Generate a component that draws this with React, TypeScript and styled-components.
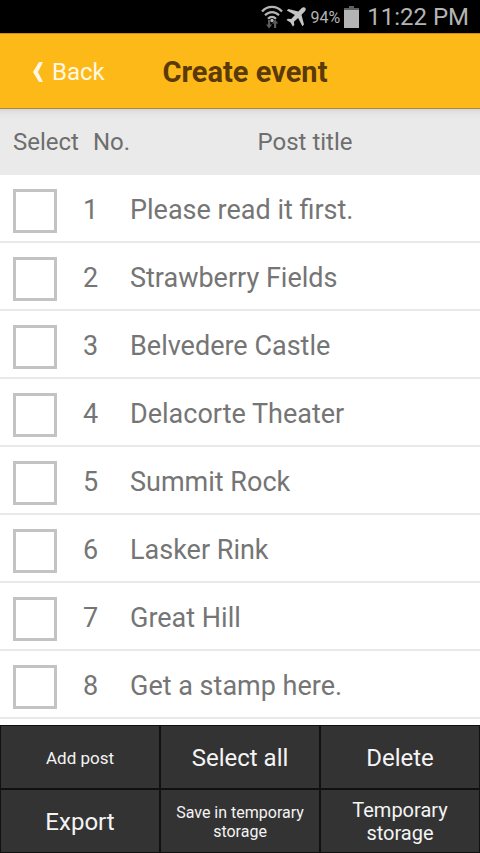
import React, { useState } from "react";
import styled, { createGlobalStyle } from "styled-components";

const GlobalStyle = createGlobalStyle`
  *, *::before, *::after { box-sizing: border-box; }
  body {
    margin: 0;
    background: #ffffff;
    font-family: Roboto, "Liberation Sans", sans-serif;
  }
`;

const Screen = styled.div`
  display: flex;
  flex-direction: column;
  height: 100vh;
`;

const StatusBar = styled.div`
  display: flex;
  flex: none;
  align-items: center;
  justify-content: flex-end;
  height: 33px;
  padding-right: 11px;
  background: #000000;
  color: #b4b4b4;
`;

const StatusIcon = styled.svg<{ $gap: number }>`
  display: block;
  flex: none;
  margin-right: ${(p) => p.$gap}px;
`;

const BatteryLevel = styled.span`
  margin-right: 4px;
  padding-top: 2px;
  font-size: 16px;
  line-height: 32px;
`;

const Clock = styled.time`
  font-size: 24px;
  line-height: 32px;
`;

const TitleBar = styled.header`
  display: grid;
  flex: none;
  grid-template-columns: 1fr auto 1fr;
  align-items: center;
  height: 76px;
  padding-top: 2px;
  padding-left: 33px;
  padding-right: 23px;
  border-top: 1px solid #c98f16;
  border-bottom: 1px solid #a58a4a;
  background: #fdb918;
`;

const BackButton = styled.button`
  display: flex;
  align-items: center;
  gap: 9px;
  justify-self: start;
  padding: 0;
  border: 0;
  background: none;
  color: #fff8e2;
  font-family: inherit;
  font-size: 24px;
  line-height: 32px;
  cursor: pointer;
`;

const Title = styled.h1`
  margin: 0;
  color: #5a3a08;
  font-size: 29px;
  font-weight: 700;
  line-height: 32px;
`;

const PostArea = styled.main`
  flex: 1;
  min-height: 0;
  overflow: hidden;
`;

const PostTable = styled.table`
  width: 100%;
  border-spacing: 0;
  table-layout: fixed;
  color: #757575;
`;

const HeadRow = styled.tr`
  height: 66px;
  background: linear-gradient(#d8d5d2, #e4e4e4 4px, #eaeaea 10px);
`;

const HeadCell = styled.th<{ $width?: number; $center?: boolean }>`
  width: ${(p) => (p.$width ? `${p.$width}px` : "auto")};
  padding: 0 0 0 ${(p) => (p.$center ? 0 : 13)}px;
  color: #6e6e6e;
  font-size: 24px;
  font-weight: 400;
  line-height: 32px;
  text-align: ${(p) => (p.$center ? "center" : "left")};
  white-space: nowrap;
`;

const PostRow = styled.tr`
  height: 68px;
`;

const Cell = styled.td<{ $left?: number; $top?: number }>`
  padding: ${(p) => p.$top ?? 4}px 0 0 ${(p) => p.$left ?? 0}px;
  border-bottom: 2px solid #e9e9e9;
  font-size: 27px;
  line-height: 32px;
  vertical-align: middle;
`;

const Tick = styled.input`
  display: block;
  width: 44px;
  height: 44px;
  margin: 0;
  border: 3px solid #c3c3c3;
  background: #ffffff;
  appearance: none;
  cursor: pointer;

  &:checked {
    background: #fdb918;
  }
`;

const Actions = styled.footer`
  display: grid;
  flex: none;
  grid-template-columns: repeat(3, 1fr);
  grid-auto-rows: 64px;
`;

const ActionButton = styled.button<{ $size: number; $line: number }>`
  padding: 1px 12px 0;
  border: 1px solid #101010;
  background: #333333;
  color: #f4f4f4;
  font-family: inherit;
  font-size: ${(p) => p.$size}px;
  line-height: ${(p) => p.$line}px;
  text-align: center;
  cursor: pointer;
`;

const posts = [
  "Please read it first.",
  "Strawberry Fields",
  "Belvedere Castle",
  "Delacorte Theater",
  "Summit Rock",
  "Lasker Rink",
  "Great Hill",
  "Get a stamp here.",
];

const actions = [
  { label: "Add post", size: 17, line: 24 },
  { label: "Select all", size: 24, line: 32 },
  { label: "Delete", size: 24, line: 32 },
  { label: "Export", size: 24, line: 32 },
  { label: "Save in temporary storage", size: 16, line: 19 },
  { label: "Temporary storage", size: 20, line: 23 },
];

function WifiIcon() {
  return (
    <StatusIcon $gap={3} width="22" height="24" viewBox="0 0 22 24" aria-hidden="true">
      <g fill="none" stroke="#b4b4b4" strokeWidth="2.2">
        <path d="M1 6.500C6.500 .3 15.500 .3 21 6.500" />
        <path d="M4 10.300C8 6 14 6 18 10.300" />
        <path d="M7 13.800C9.500 11.300 12.500 11.300 15 13.800" />
      </g>
      <circle cx="11" cy="15.500" r="1.700" fill="#b4b4b4" />
      <g fill="#5c5c5c">
        <path d="M7 15h2.200v4.500h2L8.100 23.500 5 19.500h2z" />
        <path d="M13 23h2.200v-4.500h2L14.100 14.500 11 18.500h2z" />
      </g>
    </StatusIcon>
  );
}

function PlaneIcon() {
  return (
    <StatusIcon $gap={4} width="20" height="20" viewBox="0 0 20 20" aria-hidden="true">
      <path
        fill="#c4c4c4"
        d="M19.200.8c-1.100-1-2.700-.5-3.700.5L12.300 4.500 2.400 2 .8 3.600l8.100 4.300-3.700 4.200-3.300-.4L.5 13.100l4 2.400 2.400 4 1.400-1.400-.4-3.300 4.200-3.700 4.300 8.100 1.600-1.600-2.500-9.900 3.200-3.200c1-1 1.500-2.600.5-3.700z"
      />
    </StatusIcon>
  );
}

function BatteryIcon() {
  return (
    <StatusIcon $gap={8} width="15" height="22" viewBox="0 0 15 22" aria-hidden="true">
      <path fill="#606060" d="M5 0h5v2h5v3H0V2h5z" />
      <path fill="#b4b4b4" d="M0 4h15v18H0z" />
    </StatusIcon>
  );
}

export default function App() {
  const [selected, setSelected] = useState<number[]>([]);

  const toggle = (index: number) =>
    setSelected((current) =>
      current.includes(index) ? current.filter((i) => i !== index) : [...current, index],
    );

  return (
    <>
      <GlobalStyle />
      <Screen>
        <StatusBar>
          <WifiIcon />
          <PlaneIcon />
          <BatteryLevel>94%</BatteryLevel>
          <BatteryIcon />
          <Clock>11:22 PM</Clock>
        </StatusBar>

        <TitleBar>
          <BackButton type="button">
            <svg width="10" height="20" viewBox="0 0 10 20" aria-hidden="true">
              <path fill="#fff8e2" d="M6 0h4L5 10l5 10H6L0 10z" />
            </svg>
            Back
          </BackButton>
          <Title>Create event</Title>
        </TitleBar>

        <PostArea>
          <PostTable>
            <thead>
              <HeadRow>
                <HeadCell $width={80}>Select</HeadCell>
                <HeadCell $width={50}>No.</HeadCell>
                <HeadCell $center>Post title</HeadCell>
              </HeadRow>
            </thead>
            <tbody>
              {posts.map((title, index) => (
                <PostRow key={title}>
                  <Cell $left={13} $top={6}>
                    <Tick
                      id={`post-${index}`}
                      type="checkbox"
                      checked={selected.includes(index)}
                      onChange={() => toggle(index)}
                    />
                  </Cell>
                  <Cell $left={3}>{index + 1}</Cell>
                  <Cell>
                    <label htmlFor={`post-${index}`}>{title}</label>
                  </Cell>
                </PostRow>
              ))}
            </tbody>
          </PostTable>
        </PostArea>

        <Actions>
          {actions.map(({ label, size, line }) => (
            <ActionButton key={label} type="button" $size={size} $line={line}>
              {label}
            </ActionButton>
          ))}
        </Actions>
      </Screen>
    </>
  );
}
